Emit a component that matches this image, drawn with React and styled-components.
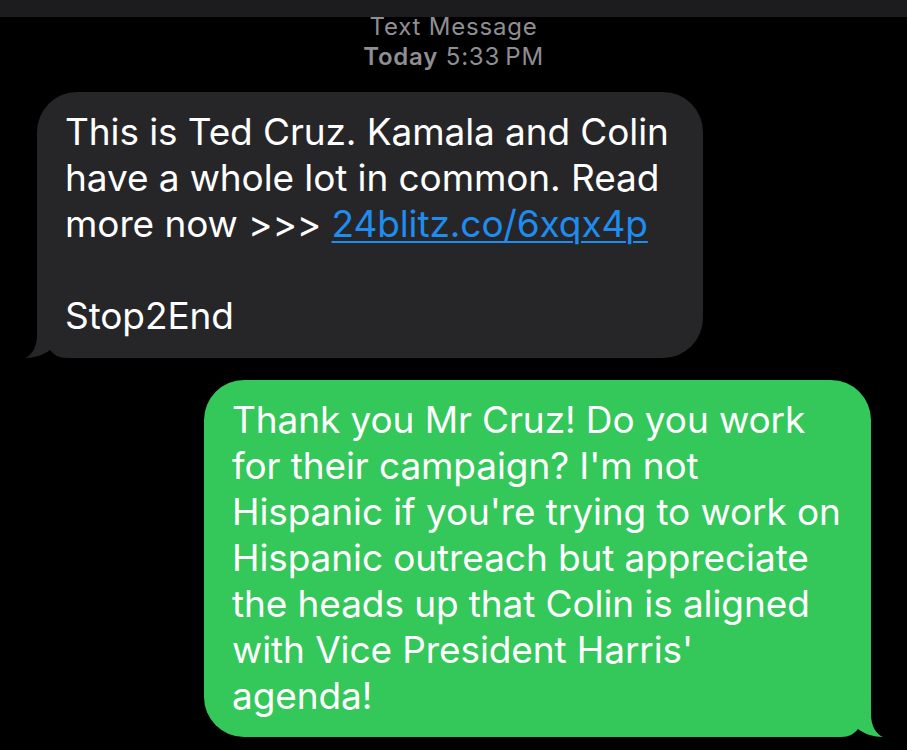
import React from 'react';
import styled, { createGlobalStyle } from 'styled-components';

const Global = createGlobalStyle`
  html, body {
    margin: 0;
    padding: 0;
    background: #000;
  }
  body {
    font-family: Inter, "Noto Sans", "Liberation Sans", sans-serif;
    -webkit-font-smoothing: antialiased;
  }
`;

const Screen = styled.div`
  width: 907px;
  height: 750px;
  overflow: hidden;
  background: #000;
  display: flex;
  flex-direction: column;
`;

const StatusStrip = styled.div`
  height: 17px;
  background: #1c1c1e;
  flex-shrink: 0;
`;

const Header = styled.div`
  display: flex;
  flex-direction: column;
  align-items: center;
  color: #8e8e93;
  font-size: 24px;
  line-height: 30px;
  margin-top: -5px;
  letter-spacing: 0.8px;

  strong {
    font-weight: 600;
  }
`;

const Row = styled.div`
  display: flex;
  justify-content: ${p => (p.$out ? 'flex-end' : 'flex-start')};
  padding: ${p => (p.$out ? '0 36px 0 0' : '0 0 0 37px')};
  margin-top: ${p => p.$gap}px;
`;

const Bubble = styled.div`
  position: relative;
  isolation: isolate;
  width: ${p => p.$w}px;
  box-sizing: border-box;
  padding: ${p => p.$pad};
  border-radius: 40px;
  background: ${p => (p.$out ? '#34c759' : '#262628')};
  color: #fff;
  font-size: 37px;
  line-height: 46px;
  letter-spacing: -0.1px;
  white-space: nowrap;
`;

const Tail = styled.svg`
  position: absolute;
  z-index: -1;
  bottom: 0;
  ${p => (p.$out ? 'right: -12px;' : 'left: -12px;')}
  width: 52px;
  height: 40px;
  ${p => (p.$out ? 'transform: scaleX(-1);' : '')}
`;

const Link = styled.a`
  color: #1e8cf0;
  text-decoration: underline;
  text-decoration-thickness: 2px;
  text-underline-offset: 4px;
  text-decoration-skip-ink: auto;
`;

const BubbleTail = ({ out, color }) => (
  <Tail $out={out} viewBox="0 0 52 40">
    <path
      d="M12 0 L12 17 C12 29 7 37 0 40 C9 40 19 37 25 32 C29 37 34 40 42 40 L52 40 L52 0 Z"
      fill={color}
    />
  </Tail>
);

export default function App() {
  return (
    <Screen>
      <Global />
      <StatusStrip />
      <Header>
        <span>Text Message</span>
        <span><strong>Today</strong> 5:33&#8201;PM</span>
      </Header>

      <Row $gap={20}>
        <Bubble $w={666} $pad="17px 28px 19px 28px">
          This is Ted Cruz. Kamala and Colin<br />
          have a whole lot in common. Read<br />
          more now &gt;&gt;&gt; <Link href="#">24blitz.co/6xqx4p</Link><br />
          <br />
          Stop2End
          <BubbleTail color="#262628" />
        </Bubble>
      </Row>

      <Row $out $gap={22}>
        <Bubble $out $w={667} $pad="17px 28px 18px 28px">
          Thank you Mr Cruz! Do you work<br />
          for their campaign? I'm not<br />
          Hispanic if you're trying to work on<br />
          Hispanic outreach but appreciate<br />
          the heads up that Colin is aligned<br />
          with Vice President Harris'<br />
          agenda!
          <BubbleTail out color="#34c759" />
        </Bubble>
      </Row>
    </Screen>
  );
}
